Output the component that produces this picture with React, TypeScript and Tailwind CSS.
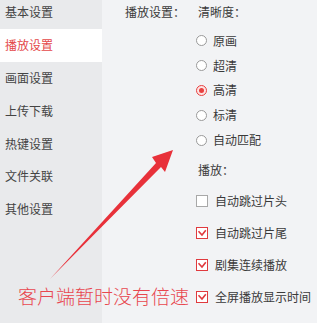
import React from "react";

const font = { fontFamily: '"Noto Sans CJK SC", "Noto Sans", sans-serif' };

const menu = ["基本设置", "播放设置", "画面设置", "上传下载", "热键设置", "文件关联", "其他设置"];

function Radio({ checked }: { checked?: boolean }) {
  return checked ? (
    <span className="w-[11px] h-[11px] rounded-full border border-[#e8403f] bg-[#fde3e3] flex items-center justify-center shrink-0">
      <span className="w-[5px] h-[5px] rounded-full bg-[#e8403f]" />
    </span>
  ) : (
    <span className="w-[11px] h-[11px] rounded-full border border-[#9a9a9a] bg-white shrink-0" />
  );
}

function Check({ checked }: { checked?: boolean }) {
  return checked ? (
    <span className="w-[12px] h-[12px] border border-[#e03a3e] bg-white flex items-center justify-center shrink-0">
      <svg width="10" height="10" viewBox="0 0 10 10">
        <path d="M1.5 3.2 L5 7 L8.8 2.2" fill="none" stroke="#e03a3e" strokeWidth="1.6" />
      </svg>
    </span>
  ) : (
    <span className="w-[12px] h-[12px] border border-[#a8a8a8] bg-white shrink-0" />
  );
}

export default function App() {
  const radios = [
    { t: "原画" },
    { t: "超清" },
    { t: "高清", c: true },
    { t: "标清" },
    { t: "自动匹配" },
  ];
  const checks = [
    { t: "自动跳过片头" },
    { t: "自动跳过片尾", c: true },
    { t: "剧集连续播放", c: true },
    { t: "全屏播放显示时间", c: true },
    { t: "自动检测DLNA设备" },
  ];
  return (
    <div className="relative w-[317px] h-[323px] overflow-hidden flex text-[12px] text-[#3a3a3a]" style={font}>
      <div className="w-[102px] shrink-0 bg-[#e9eaec] flex flex-col">
        <div className="-mt-[4px]" />
        {menu.map((m, i) => (
          <div
            key={m}
            className={
              "h-[32.8px] shrink-0 flex items-center pl-[5px] " +
              (i === 1 ? "bg-white text-[#e4484a]" : "text-[#444]")
            }
          >
            {m}
          </div>
        ))}
      </div>
      <div className="flex-1 bg-[#f2f3f5] flex items-start pl-[23px]">
        <div className="w-[71px] shrink-0 h-6 flex items-center">播放设置：</div>
        <div className="flex flex-col">
          <div className="h-6 shrink-0 flex items-center pl-[2px]">清晰度：</div>
          <div className="mt-[4.5px] flex flex-col shrink-0">
            {radios.map((r) => (
              <div key={r.t} className="h-[24.8px] shrink-0 flex items-center gap-[6px]">
                <Radio checked={r.c} />
                <span>{r.t}</span>
              </div>
            ))}
          </div>
          <div className="mt-[6px] h-6 shrink-0 flex items-center pl-[2px]">播放：</div>
          <div className="mt-[2px] flex flex-col shrink-0">
            {checks.map((r) => (
              <div key={r.t} className="h-[32.2px] shrink-0 flex items-center gap-[7px] whitespace-nowrap">
                <Check checked={r.c} />
                <span>{r.t}</span>
              </div>
            ))}
          </div>
        </div>
      </div>
      <svg className="absolute left-0 top-0 pointer-events-none" width="317" height="323" viewBox="0 0 317 323">
        <path d="M50 279 L156 163 L152 157 L173 150 L165 172 L161 167 Z" fill="#e8313a" />
      </svg>
      <div className="absolute left-[18px] top-[284px] text-[19px] leading-[24px] font-light text-[#e8474f] whitespace-nowrap" style={font}>
        客户端暂时没有倍速
      </div>
    </div>
  );
}
